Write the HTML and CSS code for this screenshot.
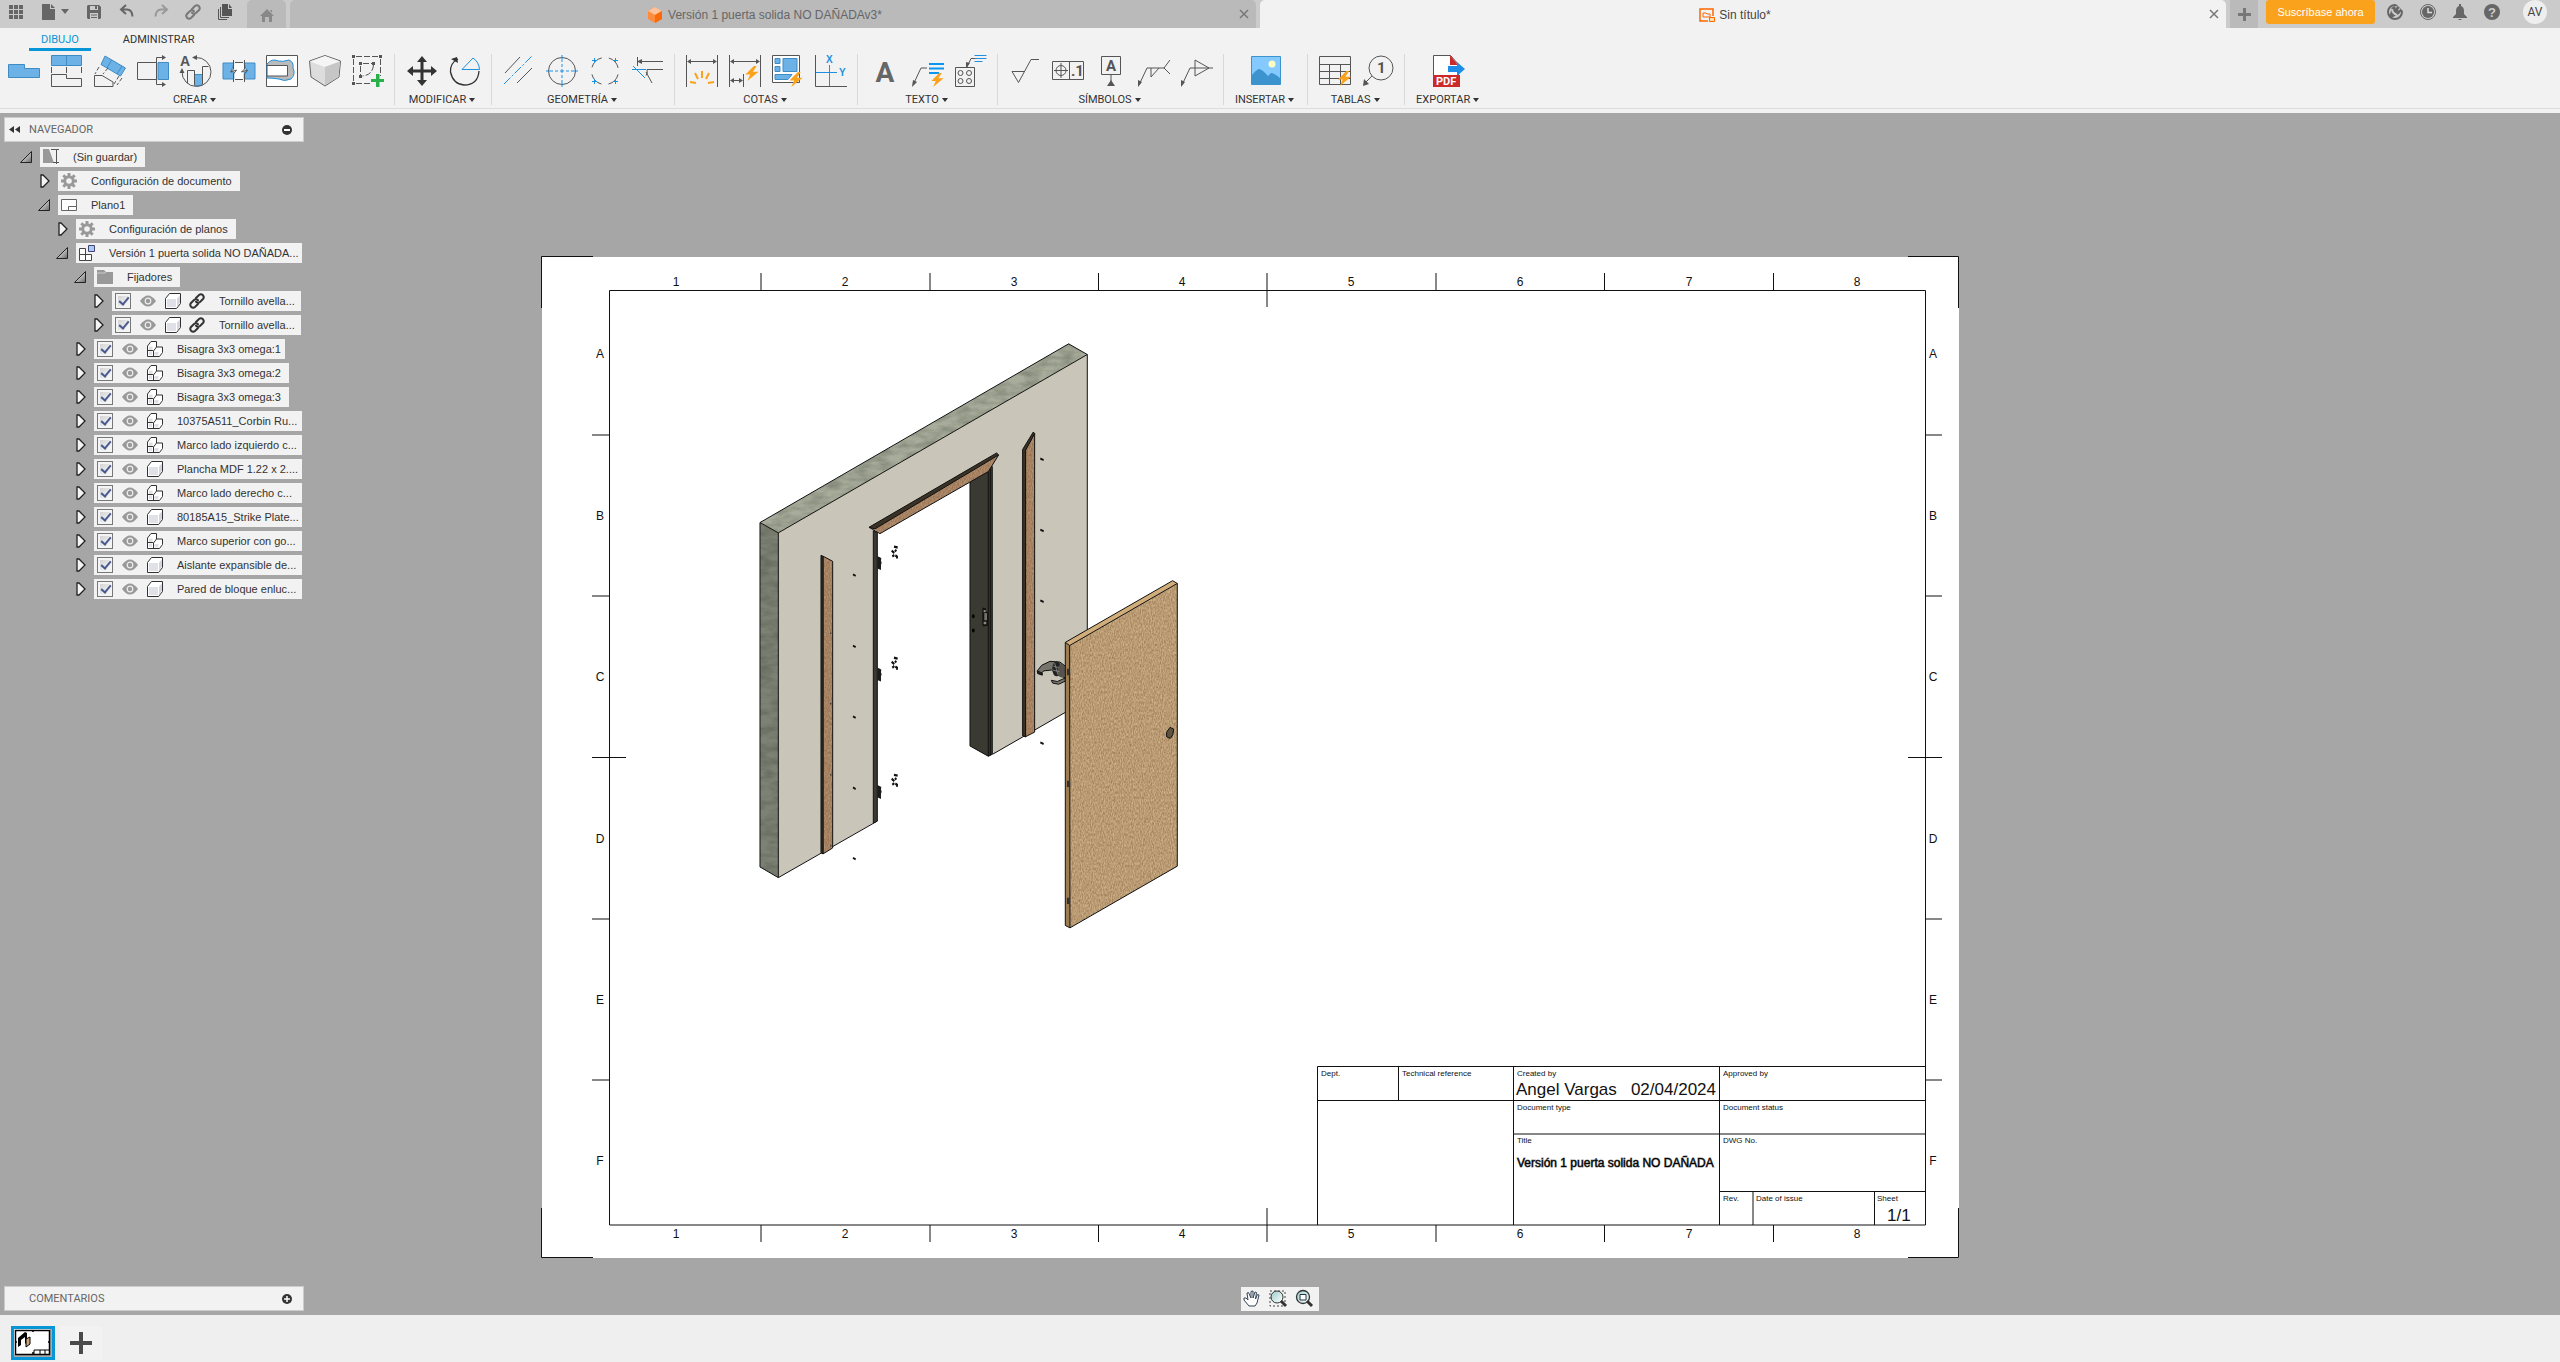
FILE: index.html
```html
<!DOCTYPE html>
<html lang="es">
<head>
<meta charset="utf-8">
<title>Sin título*</title>
<link rel="stylesheet" href="styles.css">
</head>
<body>
<svg class="defs" aria-hidden="true">
  <defs>
    <linearGradient id="shade" x1="0" y1="0" x2="1" y2="1"><stop offset=".3" stop-color="#ddd"/><stop offset="1" stop-color="#666"/></linearGradient>
    <linearGradient id="lens" x1="0" y1="0" x2="1" y2="1"><stop offset="0" stop-color="#9cc"/><stop offset="1" stop-color="#fff"/></linearGradient>
    <symbol id="open" viewBox="0 0 12 12"><path d="M11.500 .5v11H.5z" fill="url(#shade)" stroke="#222"/></symbol>
    <symbol id="shut" viewBox="0 0 12 14"><path d="M3 1h2l6 6-6 6H3z" fill="#f4f4f4" stroke="#222" stroke-width="1.3"/></symbol>
    <symbol id="gear" viewBox="0 0 16 16"><circle cx="8" cy="8" r="4.3" fill="none" stroke="#999" stroke-width="3"/><path d="M8 0v3M8 13v3M0 8h3M13 8h3M2.300 2.300l2.200 2.200M11.500 11.500l2.200 2.200M2.300 13.700l2.200-2.200M11.500 4.500l2.200-2.200" stroke="#999" stroke-width="3"/></symbol>
    <symbol id="eye" viewBox="0 0 16 12"><path d="M0 6q8-11 16 0q-8 11-16 0z" fill="#999"/><circle cx="8" cy="6" r="2.800" fill="#999" stroke="#eee" stroke-width="1.200"/></symbol>
    <symbol id="cube" viewBox="0 0 16 16"><path d="M.5 5.500l4-5h11v10l-4 5H.5z" fill="#fff" stroke="#333"/><path d="M2 6h9v8H2z" fill="#dfe1e6"/><path d="M12 5.500v8l3-3.500V2.500z" fill="#d4d6dc"/></symbol>
    <symbol id="parts" viewBox="0 0 16 16"><path d="M.5 5l3.500-4.500h5.500V6h6v5.500l-3 4H.5z" fill="#fff" stroke="#333"/><path d="M2 5.500h3.500V9H2zM2 10.500h3V14H2zM7.500 11h4v3.500h-4z" fill="#dfe1e6"/><path d="M6.500 15.500V10M6.500 10l3-4M1 9.500h5" fill="none" stroke="#333"/></symbol>
    <symbol id="chain" viewBox="0 0 16 16"><g fill="none" stroke-width="2" stroke="currentColor" stroke-linecap="round"><path d="M7 5l3-3q2-1.500 4 .3q1.500 2 0 3.700l-3 3q-2 1.500-4-.3"/><path d="M9 11l-3 3q-2 1.500-4-.3q-1.500-2 0-3.700l3-3q2-1.500 4 .3"/></g></symbol>
    <symbol id="bolt" viewBox="0 0 14 16"><path d="M9 0L0 9h5l-3 7L14 6H8l4-6z" fill="#faa21b"/></symbol>
    <filter id="concrete" x="0" y="0" width="100%" height="100%" color-interpolation-filters="sRGB"><feTurbulence type="fractalNoise" baseFrequency=".02 .06" numOctaves="5"/><feColorMatrix values="0 0 0 0 .2 0 0 0 0 .23 0 0 0 0 .18 .6 0 0 0 -.2"/><feComposite in2="SourceAlpha" operator="in" result="n"/><feMerge><feMergeNode in="SourceGraphic"/><feMergeNode in="n"/></feMerge></filter>
    <filter id="wood" x="0" y="0" width="100%" height="100%" color-interpolation-filters="sRGB"><feTurbulence type="fractalNoise" baseFrequency=".3 .15" numOctaves="2"/><feColorMatrix values="0 0 0 0 .42 0 0 0 0 .27 0 0 0 0 .12 .8 0 0 0 -.2"/><feComposite in2="SourceAlpha" operator="in" result="n"/><feMerge><feMergeNode in="SourceGraphic"/><feMergeNode in="n"/></feMerge></filter>
  </defs>
</svg>

<header class="topbar">
  <div class="quick">
    <button class="q-apps" aria-label="Panel de datos"><svg width="14" height="14" fill="#666"><path d="M0 0h4v4H0zM5 0h4v4H5zM10 0h4v4h-4zM0 5h4v4H0zM5 5h4v4H5zM10 5h4v4h-4zM0 10h4v4H0zM5 10h4v4H5zM10 10h4v4h-4z"/></svg></button>
    <button class="q-file" aria-label="Archivo"><svg width="26" height="16" fill="#666"><path d="M0 0h8v5h5v11H0zM9 0l4 4H9zM19 5h8l-4 5z"/></svg></button>
    <button class="q-save" aria-label="Guardar"><svg width="14" height="14"><path d="M0 1l1-1h11l2 2v11l-1 1H1l-1-1z" fill="#666"/><path d="M3 1h8v4H3zM3 8h8v6H3z" fill="#cbcbcb"/><path d="M8 1h2v3H8zM4 9.500h6v1H4zM4 12h6v1H4z" fill="#666"/></svg></button>
    <button class="q-undo" aria-label="Deshacer"><svg width="14" height="14" fill="none" stroke="#666" stroke-width="2"><path d="M6 0L1 4.500 6 9M1 4.500h6q5 0 5.500 7"/></svg></button>
    <button class="q-redo" aria-label="Rehacer"><svg width="14" height="14" fill="none" stroke="#999" stroke-width="2"><path d="M8 0l5 4.500L8 9M13 4.500H7q-5 0-5.500 7"/></svg></button>
    <button class="q-link" aria-label="Vínculo"><svg width="16" height="16" color="#777"><use href="#chain"/></svg></button>
    <button class="q-copy" aria-label="Copias"><svg width="15" height="16"><path d="M.5 5v10.500H9M2.500 3v10.500H11" fill="none" stroke="#555"/><path d="M4 0h6v5h4v7H4zM11 0l3 4h-3z" fill="#555"/></svg></button>
  </div>
  <button class="home" aria-label="Inicio"><svg width="14" height="13" fill="#888"><path d="M7 0l7 7h-2v6H9V8H5v5H2V7H0zM10 1h2v3z"/></svg></button>
  <div class="doc">
    <a class="doc-title" href="#"><svg width="14" height="16"><path d="M0 4l7-4 7 4v8l-7 4-7-4z" fill="#ff8b3d"/><path d="M0 4l7-4 7 4-7 4z" fill="#ffc39b"/><path d="M14 4v8l-7 4V8z" fill="#f96a0a"/></svg>Versión 1 puerta solida NO DAÑADAv3*</a>
    <button class="close" aria-label="Cerrar"><svg width="8" height="8" stroke="#777" stroke-width="1.500"><path d="M0 0l8 8M8 0L0 8"/></svg></button>
  </div>
  <div class="doc active">
    <a class="doc-title" href="#"><svg width="16" height="14"><path d="M9 13H1V1h13v7" fill="none" stroke="#f60" stroke-width="1.500"/><path d="M4 5h3l1 1h3v3H4z" fill="none" stroke="#f60"/><path d="M10.500 9.500h5v4h-5z" fill="#fda" stroke="#f60"/></svg>Sin título*</a>
    <button class="close" aria-label="Cerrar"><svg width="8" height="8" stroke="#777" stroke-width="1.500"><path d="M0 0l8 8M8 0L0 8"/></svg></button>
  </div>
  <button class="new-tab" aria-label="Nueva pestaña"><svg width="13" height="13" stroke="#777" stroke-width="3"><path d="M6.500 0v13M0 6.500h13"/></svg></button>
  <button class="subscribe">Suscríbase ahora</button>
  <div class="account">
    <button aria-label="Extensiones"><svg width="16" height="16"><circle cx="8" cy="8" r="7" fill="none" stroke="#666" stroke-width="2"/><path d="M4 6q0-3 4-4l1 3 3-3 1 1-2 3 1 1 2-2 1 1-3 4q-4 2-8 4l-2-3q2-2 2-5z" fill="#666"/><path d="M9 0l7 0v7z" fill="#cbcbcb"/><path d="M8 7l3-4M10 9l4-3" stroke="#666" stroke-width="2"/><path d="M5 5q0 4 5 6" stroke="#cbcbcb" stroke-width="2" fill="none"/></svg></button>
    <button aria-label="Historial"><svg width="16" height="16"><circle cx="8" cy="8" r="7.500" fill="none" stroke="#666"/><circle cx="8" cy="8" r="6" fill="#666"/><path d="M8 4v4.500h4" fill="none" stroke="#ddd" stroke-width="1.500"/></svg></button>
    <button aria-label="Notificaciones"><svg width="14" height="16" fill="#666"><path d="M6 0h2v2q3 1 3 5v3l3 3v1H0v-1l3-3V7q0-4 3-5zM5 15h4l-1 1H6z"/></svg></button>
    <button aria-label="Ayuda"><svg width="16" height="16"><circle cx="8" cy="8" r="8" fill="#666"/><text x="8" y="13" class="q-mark">?</text></svg></button>
    <button class="avatar">AV</button>
  </div>
</header>

<nav class="tabs">
  <button class="tab on">DIBUJO</button>
  <button class="tab">ADMINISTRAR</button>
</nav>
<section class="ribbon">
  <div class="group first">
    <div class="icons">
      <svg><path d="M.5 9.500h16v4h15v9H.5z" class="b"/></svg>
      <svg><path d="M.5.5h30v10H.5zM15.500.5v10" class="b"/><path d="M.5 12v6M15.500 12v6M30.500 12v6M.5 19.500h15v4h15v8H.5z" class="k"/></svg>
      <svg><path d="M11 1l20.500 12-5 8L7 9.500zM17.500 5l-4.500 8M28 11l-5 8" class="b"/><path d="M.5 20.500H8l11 6.500v4.500H.5z" class="k"/><path d="M5 12L1 19M14 13l-5 6M25 21l-5 8M28 23l-5 7" class="k" stroke-dasharray="4 2"/></svg>
      <svg><path d="M19 7.500H.5v17H19M27 2.500h-7.500v27H27" class="k"/><path d="M25 0l4 2.500L25 5zM25 27l4 2.500-4 2.500z" fill="#555"/><path d="M21 7.500h10.500v17H21z" class="b"/></svg>
      <svg><path d="M14.500 19.500h8v10l-4 1.500-4-1z" class="b"/><path d="M7.500 28.500v-13h7v15M22.500 29V11.500h6" class="k"/><path d="M16 2.500a14.500 14.500 0 1 1-14 14" class="k"/><path d="M12 2.500l5-2.500v5zM2 13l-2.500 5h5z" fill="#555"/><text x="0" y="11" class="small-a">A</text></svg>
      <svg><path d="M0 8h11l-3 9h3v7H0zM32 8H21l3 9h-3v7h11z" class="b"/><path d="M11.500 8h9v16h-9z" fill="#fff"/><path d="M10.500 5v9l-3 3 6-2-3 4v8M21.500 5v9l-3 3 6-2-3 4v8M12 7.500h8M12 24.500h8" class="k"/></svg>
      <svg><path d="M.5.5h31v31H.5z" fill="#fff" stroke="#555"/><path d="M1 9Q6 3 12 6q5 1 11-1 5 2 4 8 3 6-2 11-7 3-12 0-6-1-12-1z" fill="#bbb" stroke="#1e90e0"/><path d="M1 10.500h20.500v10.500H1z" fill="#fff" stroke="#555"/></svg>
      <svg><path d="M.5 6L16 .5 31.500 6 30 22 16 31 2 22z" fill="#ddd" stroke="#666"/><path d="M1 6.500L16 12l15-5.500L16 1z" fill="#f5f5f5"/><path d="M16 12l15-5.500L29.500 22 16 30z" fill="#c6c6c6"/></svg>
      <svg><path d="M1.500 4v22M4 1.500h22M28.500 4v17M4 28.500h14M8.500 11v9M11 8.500h9M21.500 10q-1 10-11 11" class="k" stroke-dasharray="6 2"/><path d="M0 0h3v3H0zM27 0h3v3h-3zM0 27h3v3H0zM7 7h3v3H7zM20 7h3v3h-3zM7 20h3v3H7z" fill="#555"/><path d="M23 18h5v5h5v5h-5v5h-5v-5h-5v-5h5z" fill="#f2f2f2"/><path d="M24 19h3.500v5H32v3h-4.500v5H24v-5h-5v-3h5z" fill="#28b04b"/></svg>
    </div>
    <button class="menu">CREAR</button>
  </div>
  <div class="group">
    <div class="icons">
      <svg><path d="M16 1l5 6h-3.500v7.500H25V11l6 5-6 5v-3.500h-7.500V25H21l-5 6-5-6h3.500v-7.500H7V21l-6-5 6-5v3.500h7.500V7H11z" fill="#333"/></svg>
      <svg><path d="M9 4Q1 8 1.500 17 4 29 15 30q14 0 15-14" fill="none" stroke="#333" stroke-width="1.300"/><path d="M2 4l6-2 1 6z" fill="#333"/><path d="M30.500 14.500H13L24 3q6 4 6.500 11.500z" fill="none" stroke="#1e90e0"/></svg>
    </div>
    <button class="menu">MODIFICAR</button>
  </div>
  <div class="group">
    <div class="icons">
      <svg><path d="M2 18L17 2M14 28l15-15" class="k"/><path d="M1 29L29 1" class="l" stroke-dasharray="9 2 2 2"/></svg>
      <svg><circle cx="16" cy="16" r="13.500" class="k"/><path d="M0 16h7M9 16h3M14 16h4M20 16h3M25 16h7M16 0v7M16 9v3M16 14v4M16 20v3M16 25v7" class="l"/></svg>
      <svg><circle cx="16" cy="16" r="13.500" class="k" stroke-dasharray="14 7.200" stroke-dashoffset="-3.500"/><path d="M3 5.500h5M5.500 3v5M24 5.500h5M26.500 3v5M3 26.500h5M5.500 24v5M24 26.500h5M26.500 24v5" class="l"/></svg>
      <svg><path d="M5.500 2v9M8 6.500h23M15 14.500h16M14 17l6 11M15 14.500q1 4-1 6" class="k"/><path d="M5 6.500l5-2.500v5z" fill="#555"/><path d="M0 14.500h14M1 11l12 12" class="l"/></svg>
    </div>
    <button class="menu">GEOMETRÍA</button>
  </div>
  <div class="group">
    <div class="icons">
      <svg><path d="M.5 0v32M31.500 0v32M3 6.500h26" class="k"/><path d="M1 6.500L5 4v5zM31 6.500L27 4v5z" fill="#555"/><path d="M16 16v7M9 18l3 6M23 18l-3 6M4 27l6 1M28 27l-6 1" stroke="#faa21b" stroke-width="2"/></svg>
      <svg><path d="M.5 0v32M31.500 0v32M3 6.500h26M14.500 19v13M3 25.500h10" class="k"/><path d="M1 6.500L5 4v5zM31 6.500L27 4v5zM1 25.500L5 23v5zM14 25.500L10 23v5z" fill="#555"/><use href="#bolt" x="16" y="11" width="14" height="15"/></svg>
      <svg><path d="M.5.500h27v27H.5z" fill="#fff" stroke="#555"/><path d="M3 3.500h5v5H3zM3 11.500h5v5H3zM11 3.500h14v13H11zM3 19.500h17l-4 5H3z" class="b"/><use href="#bolt" x="17" y="17" width="14" height="15"/></svg>
      <svg><path d="M.5 0v31.500H32" class="k"/><path d="M1 17.500h21M14.500 10v21" class="l"/><text x="11" y="8" class="axis">X</text><text x="24" y="21" class="axis">Y</text></svg>
    </div>
    <button class="menu">COTAS</button>
  </div>
  <div class="group">
    <div class="icons">
      <svg><text x="16" y="27" class="big-a">A</text></svg>
      <svg><path d="M1 30l8-17h6" class="k"/><path d="M0 32l1-7 4 2z" fill="#555"/><path d="M17 9h15M17 13.500h15M17 18h10" stroke="#0a96f0" stroke-width="2"/><use href="#bolt" x="19" y="18" width="13" height="14"/></svg>
      <svg><path d="M19.500.5h12M19.500 3.500h12M19.500 6.500h8" class="l"/><path d="M20 3.500h-4L12 12M.5 12.500h19v19H.5z" class="k"/><path d="M11 13V7l4 1z" fill="#555"/><g class="k"><circle cx="5.500" cy="18" r="2.500"/><circle cx="14" cy="18" r="2.500"/><circle cx="5.500" cy="26" r="2.500"/><circle cx="14" cy="26" r="2.500"/></g></svg>
    </div>
    <button class="menu">TEXTO</button>
  </div>
  <div class="group">
    <div class="icons">
      <svg><path d="M3 16.500h13M3 16.500l6.500 11L22 4.500h8" class="k"/></svg>
      <svg><path d="M.5 6.500h31v18H.5zM17.500 6.500v18M2 15.500h14M9 8v15" class="k"/><circle cx="9" cy="15.500" r="5" class="k"/><text x="19" y="21" class="icon-text">.1</text></svg>
      <svg><path d="M6.500 1.500h19v18h-19zM16 20v7" class="k"/><path d="M16 25l4 6h-8z" fill="#555"/><text x="11" y="16" class="icon-text">A</text></svg>
      <svg><path d="M1 30l8-17h18M32 5l-6 8 6 6M13 13v9l8-9" class="k"/><path d="M0 32l0-7 4 2z" fill="#555"/></svg>
      <svg><path d="M1 30l8-17h23M14 5v16l14-8z" class="k"/><path d="M0 32l0-7 4 2z" fill="#555"/></svg>
    </div>
    <button class="menu">SÍMBOLOS</button>
  </div>
  <div class="group">
    <div class="icons">
      <svg><path d="M1.500 1.500h29v28h-29z" fill="#84caff" stroke="#3d93cd"/><path d="M2 20q4-5 7-6 4 1 9 7l3-3q3 0 9 5v6H2z" fill="#3d93cd"/><circle cx="22" cy="9" r="3.500" fill="#ffffc4"/></svg>
    </div>
    <button class="menu">INSERTAR</button>
  </div>
  <div class="group">
    <div class="icons">
      <svg><path d="M.5 1.500h31v28H.5zM.5 9.500h31M.5 16.500h31M.5 23.500h31M10.500 9.500v20M21.500 9.500v20" class="k"/><use href="#bolt" x="19" y="16" width="13" height="15"/></svg>
      <svg><circle cx="19" cy="13" r="12" class="k"/><path d="M10 21l-8 8" class="k"/><path d="M1 31l1-7 5 5z" fill="#555"/><text x="15" y="18" class="icon-text">1</text></svg>
    </div>
    <button class="menu">TABLAS</button>
  </div>
  <div class="group last">
    <div class="icons">
      <svg><path d="M.5.5h17l8 9v11H.5z" fill="#fff" stroke="#555"/><path d="M17 0l8 10h-8z" fill="#cc2a2a"/><path d="M15 11h9V7l8 7-8 7v-4h-9z" fill="#1e8de6"/><path d="M0 20h27v12H0z" fill="#cc2a2a"/><text x="3" y="30" class="pdf">PDF</text></svg>
    </div>
    <button class="menu">EXPORTAR</button>
  </div>
</section>

<main class="canvas">
  <aside class="browser">
    <div class="panel-head">
      <svg width="11" height="8" fill="#333"><path d="M5 0v7L0 3.500zM11 0v7L6 3.500z"/></svg>
      <span>NAVEGADOR</span>
      <button aria-label="Contraer"><svg width="10" height="10"><circle cx="5" cy="5" r="5" fill="#333"/><path d="M2 5h6" stroke="#fff" stroke-width="2"/></svg></button>
    </div>
    <ul class="tree">
      <li class="l0"><button class="tw" aria-label="Contraer"><svg><use href="#open"/></svg></button><div class="chip"><svg class="i16"><path d="M0 0h6l5 14H0z" fill="#999"/><path d="M8 .5h8M13.500 0v15M10 13.500h6" stroke="#555" fill="none"/></svg><span>(Sin guardar)</span></div></li>
      <li class="l1"><button class="tw" aria-label="Expandir"><svg><use href="#shut"/></svg></button><div class="chip"><svg class="i16"><use href="#gear"/></svg><span>Configuración de documento</span></div></li>
      <li class="l1"><button class="tw" aria-label="Contraer"><svg><use href="#open"/></svg></button><div class="chip"><svg class="i16"><path d="M.5 2.500h15v11H.5zM7.500 13v-3.500h8" fill="#fff" stroke="#666"/></svg><span>Plano1</span></div></li>
      <li class="l2"><button class="tw" aria-label="Expandir"><svg><use href="#shut"/></svg></button><div class="chip"><svg class="i16"><use href="#gear"/></svg><span>Configuración de planos</span></div></li>
      <li class="l2"><button class="tw" aria-label="Contraer"><svg><use href="#open"/></svg></button><div class="chip long"><svg class="i16"><path d="M.5 3.500h6v6h-6zM.5 9.500h6v6h-6zM6.500 9.500h6v6h-6z" fill="#fff" stroke="#444"/><path d="M9.500.5h6v6h-6z" fill="#a8cdf5" stroke="#447"/></svg><span>Versión 1 puerta solida NO DAÑADA...</span></div></li>
      <li class="l3"><button class="tw" aria-label="Contraer"><svg><use href="#open"/></svg></button><div class="chip"><svg class="i16"><path d="M0 1h7l2 2h7v12H0z" fill="#999"/><path d="M0 4h8l1-1" stroke="#ccc" fill="none"/></svg><span>Fijadores</span></div></li>
      <li class="l4"><button class="tw" aria-label="Expandir"><svg><use href="#shut"/></svg></button><label class="chip long linked"><input type="checkbox" checked><svg class="eye"><use href="#eye"/></svg><svg class="i16"><use href="#cube"/></svg><svg class="i16"><use href="#chain"/></svg><span>Tornillo avella...</span></label></li>
      <li class="l4"><button class="tw" aria-label="Expandir"><svg><use href="#shut"/></svg></button><label class="chip long linked"><input type="checkbox" checked><svg class="eye"><use href="#eye"/></svg><svg class="i16"><use href="#cube"/></svg><svg class="i16"><use href="#chain"/></svg><span>Tornillo avella...</span></label></li>
      <li class="l3"><button class="tw" aria-label="Expandir"><svg><use href="#shut"/></svg></button><label class="chip part"><input type="checkbox" checked><svg class="eye"><use href="#eye"/></svg><svg class="i16"><use href="#parts"/></svg><span>Bisagra 3x3 omega:1</span></label></li>
      <li class="l3"><button class="tw" aria-label="Expandir"><svg><use href="#shut"/></svg></button><label class="chip"><input type="checkbox" checked><svg class="eye"><use href="#eye"/></svg><svg class="i16"><use href="#parts"/></svg><span>Bisagra 3x3 omega:2</span></label></li>
      <li class="l3"><button class="tw" aria-label="Expandir"><svg><use href="#shut"/></svg></button><label class="chip"><input type="checkbox" checked><svg class="eye"><use href="#eye"/></svg><svg class="i16"><use href="#parts"/></svg><span>Bisagra 3x3 omega:3</span></label></li>
      <li class="l3"><button class="tw" aria-label="Expandir"><svg><use href="#shut"/></svg></button><label class="chip long"><input type="checkbox" checked><svg class="eye"><use href="#eye"/></svg><svg class="i16"><use href="#parts"/></svg><span>10375A511_Corbin Ru...</span></label></li>
      <li class="l3"><button class="tw" aria-label="Expandir"><svg><use href="#shut"/></svg></button><label class="chip long"><input type="checkbox" checked><svg class="eye"><use href="#eye"/></svg><svg class="i16"><use href="#parts"/></svg><span>Marco lado izquierdo c...</span></label></li>
      <li class="l3"><button class="tw" aria-label="Expandir"><svg><use href="#shut"/></svg></button><label class="chip long"><input type="checkbox" checked><svg class="eye"><use href="#eye"/></svg><svg class="i16"><use href="#cube"/></svg><span>Plancha MDF 1.22 x 2....</span></label></li>
      <li class="l3"><button class="tw" aria-label="Expandir"><svg><use href="#shut"/></svg></button><label class="chip long"><input type="checkbox" checked><svg class="eye"><use href="#eye"/></svg><svg class="i16"><use href="#parts"/></svg><span>Marco lado derecho c...</span></label></li>
      <li class="l3"><button class="tw" aria-label="Expandir"><svg><use href="#shut"/></svg></button><label class="chip long"><input type="checkbox" checked><svg class="eye"><use href="#eye"/></svg><svg class="i16"><use href="#cube"/></svg><span>80185A15_Strike Plate...</span></label></li>
      <li class="l3"><button class="tw" aria-label="Expandir"><svg><use href="#shut"/></svg></button><label class="chip long"><input type="checkbox" checked><svg class="eye"><use href="#eye"/></svg><svg class="i16"><use href="#parts"/></svg><span>Marco superior con go...</span></label></li>
      <li class="l3"><button class="tw" aria-label="Expandir"><svg><use href="#shut"/></svg></button><label class="chip long"><input type="checkbox" checked><svg class="eye"><use href="#eye"/></svg><svg class="i16"><use href="#cube"/></svg><span>Aislante expansible de...</span></label></li>
      <li class="l3"><button class="tw" aria-label="Expandir"><svg><use href="#shut"/></svg></button><label class="chip long"><input type="checkbox" checked><svg class="eye"><use href="#eye"/></svg><svg class="i16"><use href="#cube"/></svg><span>Pared de bloque enluc...</span></label></li>
    </ul>
  </aside>

  <svg class="sheet" viewBox="541 256 1418 1002">
    <path d="M542 257h1417v1001H542z" fill="#fff"/>
    <g fill="none" stroke="#111">
      <path d="M593 256.500H541.500V308M1908 256.500h50.500V308M593 1257.500h-51.500V1208M1908 1257.500h50.500V1208"/>
      <path d="M609.500 290.500h1316v934.500h-1316z"/>
      <path d="M761 273v17M930 273v17M1098.500 273v17M1267 273v34M1436 273v17M1604.500 273v17M1773.500 273v17M761 1225v17M930 1225v17M1098.500 1225v17M1267 1208v34M1436 1225v17M1604.500 1225v17M1773.500 1225v17"/>
      <path d="M592 435h17M592 596h17M592 757.500h34M592 919h17M592 1080h17M1925 435h17M1925 596h17M1908 757.500h34M1925 919h17M1925 1080h17"/>
      <path d="M1317.500 1225v-158.500h608M1317.500 1100.500h608M1398.500 1066.500v34M1513.500 1066.500V1225M1719.500 1066.500V1225M1513.500 1134h412M1719.500 1191.500h206M1753 1191.500V1225M1874.500 1191.500V1225"/>
    </g>
    <g class="zone">
      <text x="676" y="286">1</text><text x="845" y="286">2</text><text x="1014" y="286">3</text><text x="1182" y="286">4</text><text x="1351" y="286">5</text><text x="1520" y="286">6</text><text x="1689" y="286">7</text><text x="1857" y="286">8</text>
      <text x="676" y="1238">1</text><text x="845" y="1238">2</text><text x="1014" y="1238">3</text><text x="1182" y="1238">4</text><text x="1351" y="1238">5</text><text x="1520" y="1238">6</text><text x="1689" y="1238">7</text><text x="1857" y="1238">8</text>
      <text x="600" y="358">A</text><text x="600" y="520">B</text><text x="600" y="681">C</text><text x="600" y="843">D</text><text x="600" y="1004">E</text><text x="600" y="1165">F</text>
      <text x="1933" y="358">A</text><text x="1933" y="520">B</text><text x="1933" y="681">C</text><text x="1933" y="843">D</text><text x="1933" y="1004">E</text><text x="1933" y="1165">F</text>
    </g>
    <g class="field">
      <text x="1321" y="1076">Dept.</text><text x="1402" y="1076">Technical reference</text><text x="1517" y="1076">Created by</text><text x="1723" y="1076">Approved by</text>
      <text x="1517" y="1110">Document type</text><text x="1723" y="1110">Document status</text>
      <text x="1517" y="1143">Title</text><text x="1723" y="1143">DWG No.</text>
      <text x="1723" y="1201">Rev.</text><text x="1756" y="1201">Date of issue</text><text x="1877" y="1201">Sheet</text>
    </g>
    <g class="value"><text x="1516" y="1095">Angel Vargas</text><text x="1716" y="1095" text-anchor="end">02/04/2024</text><text x="1887" y="1221">1/1</text></g>
    <text class="plan-title" x="1517" y="1167">Versión 1 puerta solida NO DAÑADA</text>

    <!-- Exploded isometric of the wall, frame and door -->
    <g class="iso" transform="matrix(.3333 0 0 .3954 740 330)">
      <path d="M115 513L1042 62V935L758 1073V345L400 508V1247L115 1385z" fill="#c9c5b9"/>
      <path d="M60 487L115 513V1385L60 1358z" fill="#7e8275" filter="url(#concrete)"/>
      <path d="M60 487L986 35 1042 62 115 513z" fill="#a8ac9b" filter="url(#concrete)"/>
      <path class="ln" d="M60 487L986 35 1042 62V935L758 1073M412 1242L115 1385 60 1358V487L115 513 1042 62M115 513V1385"/>
      <path class="ln" d="M690 385L757 345V1073L745 1078 690 1052z" fill="#3a3932"/>
      <path class="ln" d="M745 358V1078M751 350V1076"/>
      <path class="ln" d="M400 508L412 512V1242L400 1247z" fill="#3a3932"/>
      <path d="M400 502L420 515 745 358 776 316z" fill="#b59274" filter="url(#wood)"/>
      <path class="ln" d="M387 499L420 515 745 358 776 316"/>
      <path class="ln" d="M387 499L770 311 776 316 405 503z" fill="#3a3226"/>
      <path d="M249 572L278 585V1310L249 1325z" fill="#b59274" filter="url(#wood)"/>
      <path class="ln" d="M249 572L278 585V1310L249 1325z"/>
      <path class="ln" d="M243 570L249 572V1325L243 1322z" fill="#3a3226"/>
      <path d="M856 303L884 262V1017L856 1029z" fill="#b59274" filter="url(#wood)"/>
      <path class="ln" d="M856 303L884 262V1017L856 1029z"/>
      <path class="ln" d="M848 302L880 258 884 262 857 304V1029L848 1026z" fill="#3a3226"/>
      <path class="ln" d="M892 862L905 848 930 838 960 840 976 850V880L958 874 935 860 912 862 901 870z" fill="#77746c"/>
      <path class="ln" d="M934 886L952 889 976 880V888L956 896 938 893z" fill="#77746c"/>
      <path class="ln" d="M892 862l15 6v5l-14-4z" fill="#222"/>
      <ellipse cx="950" cy="857" rx="13" ry="19" fill="#222"/><ellipse cx="964" cy="862" rx="11" ry="17" fill="#55534c"/><path d="M940 850l16 4M944 842l10 30M938 860l20 4" stroke="#999" stroke-width="2"/>
      <path d="M989 798L1312 641V1356L990 1512z" fill="#cdb088" filter="url(#wood)"/>
      <path d="M976 790L1298 634 1312 641 989 798z" fill="#d1ad7a"/>
      <path d="M976 790L989 798 990 1512 976 1506z" fill="#9c7c50"/>
      <path class="ln" d="M976 790L1298 634 1312 641V1356L990 1512 976 1506zL989 798 1312 641M989 798L990 1512"/>
      <path d="M981 857h8v16h-8zM981 1140h8v16h-8zM981 1436h8v16h-8z" fill="#333"/>
      <path class="ln" d="M1280 1017l10-12 11 4-2 14-8 10-11-4z" fill="#5e5340"/>
      <path d="M271 765h3v4h-3zM271 943h3v4h-3zM271 1123h3v4h-3zM271 1303h3v4h-3z" fill="#222"/>
      <path d="M339 618l8 4M339 798l8 4M339 977l8 4M339 1157l8 4M339 1335l8 4M901 325l10 4M901 505l10 4M901 684l10 4M901 1043l10 4" stroke="#111" stroke-width="5"/>
      <g fill="#1c1c1c"><path id="hinge" d="M412 572l8 3 4 2-1 6 2 6-2 5v13l-11-4z"/><use href="#hinge" y="282"/><use href="#hinge" y="579"/></g>
      <path d="M728 702l10 2v8l6 2v34l-14 2-3-4V706z" fill="#15140f"/><path d="M731 708h6v6h-6zM731 738h8v6h-8z" fill="#888"/><path d="M733 716h8v18h-8z" fill="#77746c"/>
      <ellipse cx="700" cy="724" rx="4" ry="5"/><ellipse cx="700" cy="760" rx="4" ry="5"/>
      <g fill="none" stroke="#111" stroke-width="6"><path id="pins" d="M462 548l11 2M455 558l8 6M465 556l4 4M457 573l6-4M466 570l5 3v5"/><use href="#pins" y="281"/><use href="#pins" y="577"/></g>
    </g>
  </svg>

  <div class="view-tools">
    <button aria-label="Encuadre"><svg width="18" height="18"><path d="M6 16L1 10V8l2 0 2 2-1-7 1.500-.5L8 8V1.500l2-.5V8l2-6 1.500.5L12.500 9l2-4.500 1.500.5-2 8-2 3z" fill="#fff" stroke="#345"/></svg></button>
    <button aria-label="Ventana de zoom"><svg width="18" height="18"><path d="M1 1h15v15H1z" fill="none" stroke="#444" stroke-dasharray="2 2"/><circle cx="8" cy="7" r="6" fill="url(#lens)" stroke="#333"/><path d="M12 11l5 5" stroke="#333" stroke-width="3"/></svg></button>
    <button aria-label="Ajustar"><svg width="18" height="18"><circle cx="8" cy="7" r="6.500" fill="url(#lens)" stroke="#333" stroke-width="1.300"/><path d="M5 4.500h6v5.500H5z" fill="#fff" stroke="#234"/><path d="M12 11l5 5" stroke="#333" stroke-width="3"/></svg></button>
  </div>
  <div class="comments">
    <span>COMENTARIOS</span>
    <button aria-label="Expandir"><svg width="10" height="10"><circle cx="5" cy="5" r="5" fill="#333"/><path d="M2 5h6M5 2v6" stroke="#fff" stroke-width="1.500"/></svg></button>
  </div>
</main>

<footer class="sheets">
  <button class="thumb" aria-label="Plano1"><svg width="38" height="28"><path d="M0 0h38v28H0z" fill="#aaa"/><path d="M0 0h36v26H0z" fill="#fff"/><path d="M1.500 1.500h34v24h-34zM19 1v2M19 25v-2M1 13h2M34 13h2" fill="none" stroke="#000" stroke-width="1.500"/><path d="M4 9l7-6 2 1v9l-2 2V8l-4 3v5l-3 2z"/><path d="M12 10l4-2v7l-4 3z" fill="#c9a477" stroke="#000"/><path d="M20 25v-4h15M26 21v4M31 21v4" fill="none" stroke="#000"/></svg></button>
  <button class="add" aria-label="Añadir plano"><svg width="22" height="22" stroke="#4a4a4a" stroke-width="4"><path d="M11 0v22M0 11h22"/></svg></button>
</footer>
</body>
</html>
```
FILE: styles.css
```css
* { box-sizing: border-box; }
body {
  margin: 0;
  min-height: 100vh;
  display: flex;
  flex-direction: column;
  background: #a6a6a6;
  color: #333;
  font: 11px/16px "Liberation Sans", Arial, sans-serif;
}
button {
  margin: 0;
  padding: 0;
  border: 0;
  background: none;
  color: inherit;
  font: inherit;
  display: flex;
  align-items: center;
  justify-content: center;
}
svg { display: block; flex: none; overflow: visible; }
.defs { position: absolute; width: 0; height: 0; }

/* Title bar */
.topbar { display: flex; gap: 4px; height: 28px; background: #cbcbcb; }
.quick { display: flex; align-items: center; width: 243px; height: 24px; padding-left: 9px; }
.q-file { margin-left: 19px; }
.q-save { margin-left: 19px; }
.q-undo { margin-left: 19px; }
.q-redo { margin-left: 20px; }
.q-link { margin-left: 17px; }
.q-copy { margin-left: 17px; }
.home { width: 39px; padding-top: 3px; background: #bababa; border-radius: 5px 5px 0 0; }
.doc { flex: 1; display: flex; align-items: center; padding-right: 8px; background: #bababa; border-radius: 5px 5px 0 0; }
.doc-title { flex: 1; display: flex; align-items: center; justify-content: center; gap: 6px; padding-top: 2px; color: #666; font-size: 12px; text-decoration: none; }
.doc.active { background: #f2f2f2; }
.active .doc-title { gap: 4px; color: #444; }
.new-tab { width: 28px; background: #bababa; }
.subscribe { width: 109px; height: 24px; margin-left: 4px; background: #faa21b; border-radius: 3px; color: #fff; }
.account { display: flex; align-items: center; gap: 17px; height: 24px; padding: 0 13px 0 8px; }
.q-mark { font-size: 13px; font-weight: bold; fill: #ccc; text-anchor: middle; }
.avatar { width: 24px; height: 24px; margin-left: 6px; border-radius: 50%; background: #eee; font: 12px/24px Roboto, sans-serif; color: #444; }

/* Ribbon */
.tabs { display: flex; gap: 20px; height: 26px; padding-left: 29px; background: #f2f2f2; font-family: Roboto, sans-serif; }
.tab { height: 23px; padding: 3px 12px 0; border-bottom: 3px solid transparent; }
.tab.on { color: #0696d7; border-color: #0696d7; }
.ribbon { display: flex; height: 59px; background: #f2f2f2; border-bottom: 4px solid #f2f2f2; box-shadow: inset 0 -1px #dcdcdc; font-family: Roboto, sans-serif; }
.group { display: flex; flex-direction: column; align-items: center; height: 51px; padding: 1px 10px 0 11px; border-right: 1px solid #d9d9d9; min-width: 84px; }
.group.first { padding-left: 8px; }
.group.last { border: 0; min-width: 87px; }
.icons { display: flex; gap: 11px; margin-bottom: 5px; }
.icons svg { width: 32px; height: 32px; }
.menu { gap: 3px; padding-right: 3px; white-space: nowrap; }
.menu::after { content: ""; border: 3px solid transparent; border-top: 4px solid #333; border-bottom: 0; }
.b { fill: #6cb2e6; stroke: #3f8bc4; }
.k { fill: none; stroke: #555; }
.l { fill: none; stroke: #1e90e0; }
.small-a { font: bold 14px "Liberation Sans", sans-serif; fill: #555; }
.big-a { font: bold 28px Roboto, sans-serif; fill: #666; text-anchor: middle; }
.axis { font: bold 10px "Liberation Sans", sans-serif; fill: #1e90e0; }
.icon-text { font: bold 15px Roboto, sans-serif; fill: #555; }
.pdf { font: bold 11px Roboto, sans-serif; fill: #fff; }

/* Drawing canvas and the panels that float over it */
.canvas { position: relative; flex: 1; padding: 143px 60px 57px 0; }
.sheet { width: 100%; max-width: 1418px; margin: 0 auto; }
.browser { position: absolute; left: 4px; top: 4px; width: 300px; }
.panel-head, .comments { display: flex; align-items: center; height: 25px; padding: 0 11px 0 4px; background: #f2f2f2; border: 1px solid #ccc; font-family: Roboto, sans-serif; color: #666; }
.panel-head span { flex: 1; margin-left: 9px; }
.comments { position: absolute; left: 4px; bottom: 4px; width: 300px; }
.comments span { flex: 1; margin-left: 20px; }
.tree { display: flex; flex-direction: column; gap: 4px; width: 298px; margin: 5px 0 0; padding: 0; list-style: none; }
.tree li { display: flex; align-items: center; height: 20px; }
.l0 { padding-left: 16px; }
.l1 { padding-left: 34px; }
.l2 { padding-left: 52px; }
.l3 { padding-left: 70px; }
.l4 { padding-left: 88px; }
.tw { flex: none; width: 12px; height: 14px; margin-right: 8px; }
.tw svg { width: 12px; height: 14px; }
.chip { display: flex; align-items: center; height: 20px; padding: 0 8px 0 3px; background: #f2f2f2; white-space: nowrap; overflow: hidden; }
.chip.long { flex: 1; padding-right: 0; }
.chip.linked { margin-right: 1px; }
.chip.part { padding-right: 4px; }
.chip span { margin-left: 14px; }
.i16 { width: 16px; height: 16px; }
.i16 + .i16 { margin-left: 8px; }
.eye { width: 16px; height: 12px; margin: 0 9px; }
.chip input { appearance: none; flex: none; position: relative; width: 16px; height: 16px; margin: 0; border: 1px solid #777; background: linear-gradient(135deg, #ccc, #fff); box-shadow: inset 0 0 0 2px #f4f4f4; }
.chip input:checked::before { content: ""; position: absolute; left: 5px; top: 1px; width: 4px; height: 8px; border: solid #4a5a92; border-width: 0 2px 2px 0; transform: rotate(40deg); }
.view-tools { position: absolute; left: 1241px; bottom: 4px; display: flex; gap: 8px; width: 78px; height: 24px; padding-left: 2px; background: #f2f2f2; }

/* Sheet lettering */
.zone { font-size: 12px; text-anchor: middle; fill: #111; }
.field { font-size: 8px; fill: #111; }
.value { font-size: 17px; fill: #111; }
.plan-title { font-size: 12px; fill: #000; stroke: #000; stroke-width: 1px; stroke-opacity: .5; }
.ln { stroke: #111; stroke-width: 1px; vector-effect: non-scaling-stroke; }
.iso .ln:not([fill]) { fill: none; }

/* Sheet strip */
.sheets { display: flex; align-items: flex-start; height: 47px; padding: 11px 11px 0; background: #efefef; }
.thumb { width: 44px; height: 34px; border: 3px solid #0696d7; }
.add { width: 42px; height: 34px; margin-left: 5px; background: #f2f2f2; }
```
